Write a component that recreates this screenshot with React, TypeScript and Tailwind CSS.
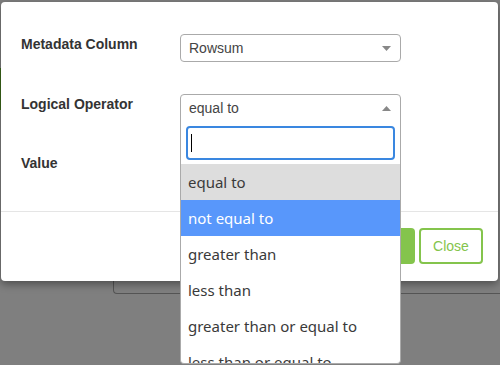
const options = [
  "equal to",
  "not equal to",
  "greater than",
  "less than",
  "greater than or equal to",
  "less than or equal to",
]

function Caret({ up = false }: { up?: boolean }) {
  return (
    <svg width="9" height="5" viewBox="0 0 9 5" className="shrink-0">
      {up ? <path d="M0 5 L4.5 0 L9 5 Z" fill="#888" /> : <path d="M0 0 L9 0 L4.5 5 Z" fill="#888" />}
    </svg>
  )
}

export default function App() {
  return (
    <div
      className="relative h-[365px] w-[500px] overflow-hidden bg-[#7f7f7f]"
      style={{ fontFamily: '"Liberation Sans", Arial, sans-serif' }}
    >
      {/* page behind backdrop */}
      <div className="absolute left-0 top-[68px] h-[42px] w-[2px] bg-[#3c6a1a]" />
      <div className="absolute left-[113px] top-[250px] h-[44px] w-[400px] rounded-bl-[4px] border-b border-l border-[#555]" />

      {/* modal */}
      <div className="absolute left-[1px] top-[2px] flex h-[279px] w-[497px] flex-col rounded-[4px] bg-white shadow-[0_3px_9px_rgba(0,0,0,0.4)]">
        <div className="flex h-[209px] flex-col px-5 pt-[32px]">
          <div className="flex items-start">
            <div className="w-[159px] text-[14px] leading-[20px] font-bold text-[#333]">Metadata Column</div>
            <div className="flex h-[28px] w-[221px] items-center justify-between rounded-[4px] border border-[#aaa] pl-2 pr-[9px] text-[14px] text-[#444]">
              <span>Rowsum</span>
              <Caret />
            </div>
          </div>
          <div className="mt-[32px] flex items-start">
            <div className="w-[159px] text-[14px] leading-[20px] font-bold text-[#333]">Logical Operator</div>
            <div className="flex h-[28px] w-[221px] items-center justify-between rounded-t-[4px] border border-[#aaa] pl-2 pr-[9px] text-[14px] text-[#444]">
              <span>equal to</span>
              <Caret up />
            </div>
          </div>
          <div className="mt-[31px] text-[14px] leading-[20px] font-bold text-[#333]">Value</div>
        </div>
        <div className="h-px bg-[#e5e5e5]" />
        <div className="flex justify-end gap-[4px] px-[15px] pt-[16px]">
          <div className="h-[36px] w-[60px] rounded-[4px] bg-[#84c44c]" />
          <div className="flex h-[36px] w-[64px] items-center justify-center rounded-[4px] border-2 border-[#84c44c] text-[14px] text-[#84c44c]">
            Close
          </div>
        </div>
      </div>

      {/* open dropdown */}
      <div className="absolute left-[180px] top-[121px] h-[243px] w-[221px] overflow-hidden rounded-b-[4px] border border-t-0 border-[#aaa] bg-white">
        <div className="p-[5px] pb-[4px]">
          <div className="flex h-[34px] items-center rounded-[4px] border-2 border-[#3a87e0] px-[3px]">
            <div className="h-[18px] w-px bg-black" />
          </div>
        </div>
        <div style={{ fontFamily: '"Noto Sans", sans-serif' }} className="text-[15px] text-[#3a3a3a]">
          {options.map((o, i) => (
            <div
              key={o}
              className={
                i === 0
                  ? "flex h-[36px] items-center bg-[#ddd] px-[7px]"
                  : i === 1
                    ? "flex h-[36px] items-center bg-[#5897fb] px-[7px] text-white"
                    : "flex h-[36px] items-center px-[7px]"
              }
            >
              {o}
            </div>
          ))}
        </div>
      </div>
    </div>
  )
}
